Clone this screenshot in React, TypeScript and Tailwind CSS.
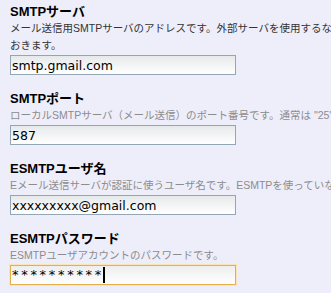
import React from "react";

const jp = "font-['Liberation_Sans','Noto_Sans_CJK_JP',sans-serif]";

function Field({
  title,
  lines,
  dark,
  value,
}: {
  title: string;
  lines: string[];
  dark?: boolean;
  value: string;
}) {
  return (
    <div className="mb-3">
      <h3 className={`${jp} pt-[3px] text-[13px] font-bold leading-[17px] text-black`}>{title}</h3>
      {lines.map((l) => (
        <p
          key={l}
          className={`${jp} whitespace-nowrap text-[10.5px] leading-[17px] ${dark ? "text-[#333333]" : "text-[#8c8c8c]"}`}
        >
          {l}
        </p>
      ))}
      <input
        readOnly
        defaultValue={value}
        className="mt-px block h-5 w-[226px] border border-[#92a6b5] bg-gradient-to-b from-[#e6e9ea] to-white px-[1px] font-['DejaVu_Sans',sans-serif] text-[12.5px] leading-[18px] text-black outline-none"
      />
    </div>
  );
}

export default function App() {
  return (
    <div className="h-[293px] w-[331px] overflow-hidden bg-[#eeeefb] px-[10px]">
      <Field
        title="SMTPサーバ"
        dark
        lines={[
          "メール送信用SMTPサーバのアドレスです。外部サーバを使用するならここに指定して",
          "おきます。",
        ]}
        value="smtp.gmail.com"
      />
      <Field
        title="SMTPポート"
        lines={['ローカルSMTPサーバ（メール送信）のポート番号です。通常は "25" です。']}
        value="587"
      />
      <Field
        title="ESMTPユーザ名"
        lines={["Eメール送信サーバが認証に使うユーザ名です。ESMTPを使っていないなら空欄にします。"]}
        value="xxxxxxxxx@gmail.com"
      />
      <div>
        <h3 className={`${jp} pt-[3px] text-[13px] font-bold leading-[17px] text-black`}>ESMTPパスワード</h3>
        <p className={`${jp} whitespace-nowrap text-[10.5px] leading-[17px] text-[#8c8c8c]`}>
          ESMTPユーザアカウントのパスワードです。
        </p>
        <div className="mt-px flex h-5 w-[226px] items-center border border-[#e5b04c] bg-gradient-to-b from-[#eeeeee] to-white px-[1px] shadow-[0_0_0_1px_#fbe5b4]">
          <span className="font-['DejaVu_Sans',sans-serif] text-[13px] leading-[18px] tracking-[2.7px] text-black">
            **********
          </span>
          <span className="-ml-[1px] h-[16px] w-[2px] bg-black" />
        </div>
      </div>
    </div>
  );
}
